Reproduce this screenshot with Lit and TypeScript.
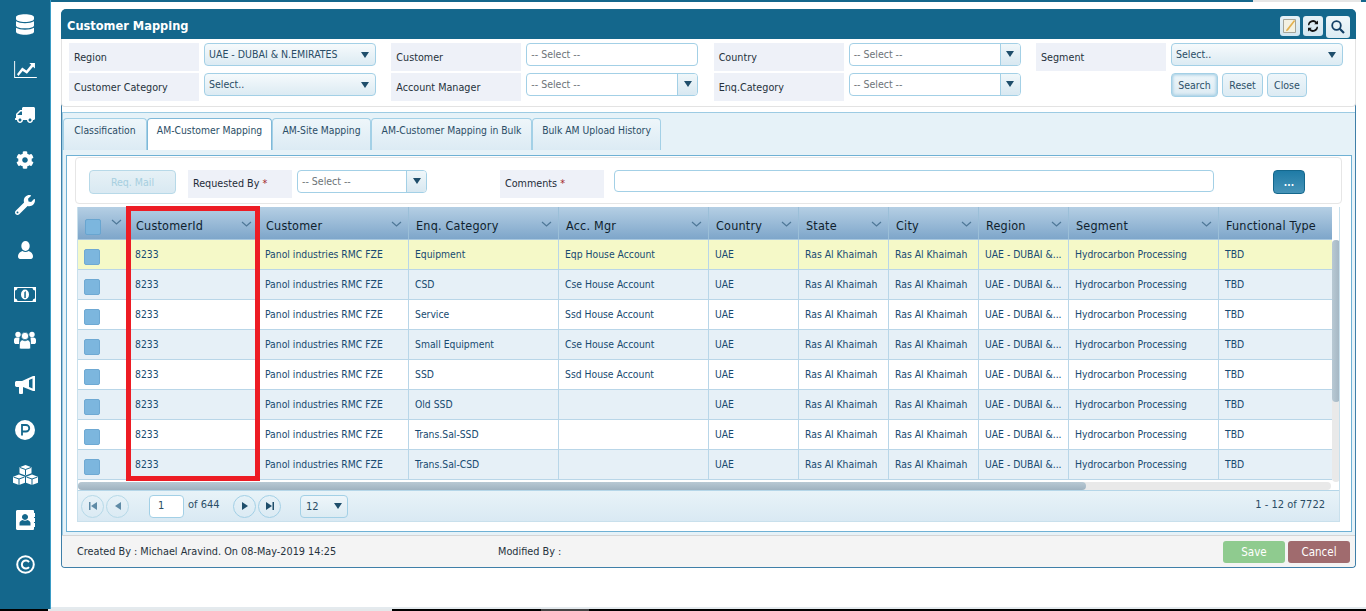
import { LitElement, html, css, svg } from "lit";
import { customElement } from "lit/decorators.js";

const teal = "#14678c";
const icons = [
  svg`<svg width="18" height="21" viewBox="0 0 448 512"><path d="M448 73.143v45.714C448 159.143 347.667 192 224 192S0 159.143 0 118.857V73.143C0 32.857 100.333 0 224 0s224 32.857 224 73.143zM448 176v102.857C448 319.143 347.667 352 224 352S0 319.143 0 278.857V176c48.125 33.143 136.208 48.572 224 48.572S399.874 209.143 448 176zm0 160v102.857C448 479.143 347.667 512 224 512S0 479.143 0 438.857V336c48.125 33.143 136.208 48.572 224 48.572S399.874 369.143 448 336z"/></svg>`,
  svg`<svg width="23" height="17" viewBox="0 0 24 18"><path d="M0 0h1v17h23v1H0z"/><path d="M3 14l5.500-7 4.500 3 5-6-2-2h6v6l-2-2-6.500 7.500-4.500-3-4.500 5.500z"/></svg>`,
  svg`<svg width="20" height="16" viewBox="0 0 640 512"><g transform="translate(640 0) scale(-1 1)"><path d="M624 352h-16V243.900c0-12.700-5.100-24.900-14.100-33.900L494 110.100c-9-9-21.200-14.100-33.900-14.100H416V48c0-26.500-21.500-48-48-48H48C21.500 0 0 21.500 0 48v320c0 26.500 21.500 48 48 48h16c0 53 43 96 96 96s96-43 96-96h128c0 53 43 96 96 96s96-43 96-96h48c8.800 0 16-7.200 16-16v-32c0-8.800-7.200-16-16-16zM160 464c-26.500 0-48-21.500-48-48s21.500-48 48-48 48 21.500 48 48-21.500 48-48 48zm320 0c-26.500 0-48-21.500-48-48s21.500-48 48-48 48 21.500 48 48-21.500 48-48 48zm80-208H416V144h44.100l99.900 99.900V256z"/></g></svg>`,
  svg`<svg width="18" height="18" viewBox="0 0 512 512"><path d="M487.400 315.700l-42.600-24.600c4.300-23.200 4.300-47 0-70.200l42.600-24.600c4.900-2.800 7.100-8.600 5.500-14-11.100-35.600-30-67.800-54.700-94.600-3.800-4.100-10-5.100-14.800-2.300L380.800 110c-17.900-15.400-38.500-27.300-60.800-35.100V25.800c0-5.600-3.900-10.500-9.400-11.700-36.700-8.200-74.300-7.800-109.200 0-5.500 1.200-9.400 6.100-9.400 11.700V75c-22.200 7.900-42.800 19.800-60.800 35.100L88.700 85.500c-4.900-2.800-11-1.900-14.800 2.300-24.700 26.700-43.600 58.900-54.700 94.600-1.700 5.400.6 11.200 5.500 14L67.300 221c-4.300 23.200-4.300 47 0 70.200l-42.600 24.600c-4.900 2.800-7.100 8.600-5.500 14 11.100 35.600 30 67.800 54.700 94.600 3.800 4.100 10 5.100 14.800 2.300l42.600-24.600c17.900 15.400 38.500 27.300 60.800 35.100v49.200c0 5.600 3.900 10.500 9.400 11.700 36.700 8.200 74.300 7.800 109.200 0 5.500-1.200 9.400-6.100 9.400-11.700v-49.200c22.200-7.900 42.800-19.800 60.800-35.100l42.600 24.600c4.900 2.800 11 1.900 14.800-2.300 24.700-26.700 43.600-58.900 54.700-94.600 1.500-5.500-.7-11.300-5.600-14.100zM256 336c-44.100 0-80-35.900-80-80s35.900-80 80-80 80 35.900 80 80-35.900 80-80 80z"/></svg>`,
  svg`<svg width="20" height="20" viewBox="0 0 512 512"><path d="M507.730 109.100c-2.240-9.030-13.540-12.090-20.120-5.510l-74.360 74.360-67.880-11.310-11.310-67.880 74.360-74.360c6.620-6.620 3.430-17.900-5.660-20.160-47.380-11.740-99.550.91-136.580 37.930-39.640 39.640-50.550 97.100-34.050 147.200L18.740 402.760c-24.990 24.990-24.990 65.510 0 90.500 24.990 24.990 65.510 24.990 90.500 0l213.210-213.210c50.120 16.710 107.470 5.680 147.370-34.220 37.070-37.070 49.700-89.320 37.910-136.730zM64 472c-13.250 0-24-10.750-24-24 0-13.260 10.750-24 24-24s24 10.740 24 24c0 13.250-10.750 24-24 24z"/></svg>`,
  svg`<svg width="15" height="18" viewBox="0 0 15 18"><ellipse cx="7.500" cy="5" rx="4.200" ry="5"/><path d="M0 15.500c0-3 2-4.800 4.500-5.500 1.500 1.300 4.500 1.300 6 0 2.500.7 4.500 2.500 4.500 5.500 0 1.500-1 2.500-2 2.500H2c-1 0-2-1-2-2.500z"/></svg>`,
  svg`<svg width="22" height="15" viewBox="0 0 22 15"><path d="M0 0h22v15H0z"/><path fill="${teal}" d="M3.500 1h15c.3 1.500 1 2.300 2.500 2.600v7.800c-1.500.3-2.200 1.100-2.500 2.600h-15C3.200 12.500 2.500 11.700 1 11.400V3.600C2.500 3.300 3.200 2.500 3.500 1z"/><ellipse cx="11" cy="7.500" rx="4" ry="5"/><path d="M10.300 5.200l1.500-1.100v6.900h-1.500z" fill="${teal}"/></svg>`,
  svg`<svg width="22" height="19" viewBox="0 0 22 19"><circle cx="4" cy="4.500" r="2.700"/><circle cx="18" cy="4.500" r="2.700"/><path d="M0 12.500V10c0-1.500 1-2.500 2.500-2.500h3L5 14H1zM22 12.500V10c0-1.500-1-2.500-2.500-2.500h-3L17 14h4z"/><circle cx="11" cy="6" r="3.700" stroke="${teal}" stroke-width=".7"/><path d="M5.500 17.500V14c0-2.500 1.500-3.800 3-4 1.500 1 3.500 1 5 0 1.500.2 3 1.500 3 4v3.500c0 1-1 1.500-1.500 1.500H7c-.5 0-1.500-.5-1.500-1.500z" stroke="${teal}" stroke-width=".6"/></svg>`,
  svg`<svg width="20" height="18" viewBox="0 0 20 18"><path d="M0 6.500c0-1 1-1.500 1.500-1.500H7l11-5h2v15h-2L8 11v6a1 1 0 0 1-1 1H5a1 1 0 0 1-1-1v-6H1.500C1 11 0 10 0 9.500z"/><path fill="${teal}" d="M14 4l3.500-1.600v10.200L14 11z"/></svg>`,
  svg`<svg width="20" height="20" viewBox="0 0 20 20"><circle cx="10" cy="10" r="10"/><path fill="none" stroke="${teal}" stroke-width="1.800" d="M7 15.500V5h4a3 3 0 0 1 0 6.500H7"/></svg>`,
  svg`<svg width="25" height="20" viewBox="0 0 25 20"><path d="M12.500 0l6 2.200v6l-6 2.200-6-2.200v-6z"/><path d="M6 9.500l6 2.200v6L6 20 0 17.700v-6zM19 9.500l6 2.200v6L19 20l-6-2.300v-6z"/><path fill="none" stroke="${teal}" d="M7 2.500l5.500 2 5.500-2M12.500 4.500v5.500M.5 12l5.500 2 5.500-2M6 14v6M13.500 12l5.500 2 5.500-2M19 14v6"/></svg>`,
  svg`<svg width="19" height="20" viewBox="0 0 19 20"><path fill-rule="evenodd" d="M2 0h15a1 1 0 0 1 1 1v18a1 1 0 0 1-1 1H2a2 2 0 0 1-2-1V1a2 2 0 0 1 2-1zM9 4a3 3 0 1 0 .01 0zM3.500 15.500h11v-2.500c0-1.500-1.500-2.500-3-3-1.500 1-3.500 1-5 0-1.500.5-3 1.500-3 3z"/><rect x="18" y="3" width="1" height="4"/><rect x="18" y="8" width="1" height="4"/><rect x="18" y="13" width="1" height="4"/></svg>`,
  svg`<svg width="19" height="19" viewBox="0 0 19 19"><circle cx="9.500" cy="9.500" r="8.300" fill="none" stroke="#fff" stroke-width="2"/><path fill="none" stroke="#fff" stroke-width="2" d="M13 7a4 4 0 1 0 0 5"/></svg>`,
];

const rows = [
  ["Equipment", "Eqp House Account"],
  ["CSD", "Cse House Account"],
  ["Service", "Ssd House Account"],
  ["Small Equipment", "Cse House Account"],
  ["SSD", "Ssd House Account"],
  ["Old SSD", ""],
  ["Trans.Sal-SSD", ""],
  ["Trans.Sal-CSD", ""],
];
const heads = ["CustomerId", "Customer", "Enq. Category", "Acc. Mgr", "Country", "State", "City", "Region", "Segment", "Functional Type"];
const tabs = ["Classification", "AM-Customer Mapping", "AM-Site Mapping", "AM-Customer Mapping in Bulk", "Bulk AM Upload History"];

const chev = svg`<svg class="chev" width="11" height="6" viewBox="0 0 11 6"><path d="M1 1l4.500 4L10 1" fill="none" stroke="#4f7898" stroke-width="1.200"/></svg>`;

@customElement("app-root")
export class AppRoot extends LitElement {
  static styles = css`
    :host { display: flex; flex-direction: column; width: 1366px; height: 611px; overflow: hidden; background: #fff;
      font-family: "DejaVu Sans Condensed", "DejaVu Sans", sans-serif; font-size: 10.5px; color: #1c3d55; font-stretch: condensed; }
    * { box-sizing: border-box; }
    .page { display: flex; height: 609px; flex: none; }
    .black { height: 2px; flex: none; background: #000; display: flex; }
    .black i { display: block; height: 2px; }
    .black .k1 { width: 48px; }
    .black .k2 { width: 344px; background: #e4e8ea; }
    .black .k3 { width: 149px; }
    .black .k4 { width: 48px; background: #444; }
    .side { width: 51px; flex: none; background: #14678c; border-right: 1px solid #3a9cc6; display: flex; flex-direction: column; padding-top: 2px; }
    .side div { height: 45px; display: flex; align-items: center; justify-content: center; fill: #fff; }
    .main { flex: 1; min-width: 0; display: flex; flex-direction: column; }
    .strip { height: 2px; background: #14678c; margin-bottom: 7px; flex: none; display: flex; justify-content: flex-end; padding-right: 5px; }
    .strip i { display: block; width: 108px; background: #e6e6e6; }
    .bline { height: 2px; margin-top: auto; background: #e4eaee; flex: none; }
    .panel { width: 1295px; margin-left: 10px; height: 559px; flex: none; border: 1px solid #3f7fa8; border-top: none; border-radius: 6px 6px 4px 4px; display: flex; flex-direction: column; }
    .title { height: 30px; flex: none; background: #14678c; border-radius: 5px 5px 0 0; display: flex; align-items: flex-start; padding: 7px 6px 0 6px; margin: 0 -1px; color: #fff; font-weight: bold; font-size: 12.7px; }
    .title span { flex: 1; line-height: 20px; }
    .tb { height: 20px; width: 20px; margin-left: 3px; background: linear-gradient(#e6f1f6, #d3e6f0); border-radius: 3px; display: flex; align-items: center; justify-content: center; }
    .tb.s { width: 24px; height: 22px; background: linear-gradient(#f0f7fa, #dcebf3); }
    .filters { height: 68px; flex: none; background: #fff; border: 1px solid #e3e3e3; border-top: none; border-radius: 0 0 4px 4px; margin: 0 -1px 0 -1px; padding: 4px 0 0 7px; display: grid; grid-template-columns: repeat(4, 322.33px); grid-auto-rows: 28px; row-gap: 2px; }
    .f { display: grid; grid-template-columns: 130px 172px; column-gap: 5px; align-items: start; }
    .lab { height: 28px; background: #eef1f8; display: flex; align-items: center; padding: 1px 5px 0; color: #26323c; font-size: 10.7px; white-space: nowrap; }
    .sel { height: 23px; border: 1px solid #a3d0e6; border-radius: 4px; background: linear-gradient(#f6fafc, #dcebf3); display: flex; align-items: flex-start; padding: 4px 4px 0 4px; color: #2a4d66; font-size: 10.5px; white-space: nowrap; }
    .sel span { flex: 1; }
    .tri { width: 0; height: 0; border-left: 4px solid transparent; border-right: 4px solid transparent; border-top: 6px solid #1f4e6b; margin: 4px 2px 0 0; flex: none; }
    .inp { height: 23px; border: 1px solid #a3d0e6; border-radius: 4px; background: #fff; display: flex; color: #6d7478; font-size: 10.5px; overflow: hidden; }
    .inp span { flex: 1; padding: 4px 4px 0; }
    .inp b { width: 20px; flex: none; background: linear-gradient(#f0f7fa, #d8e8f1); border-left: 1px solid #a3d0e6; display: flex; justify-content: center; font-weight: normal; }
    .inp b .tri { margin: 7px 0 0; }
    .btns { display: flex; gap: 4px; align-items: flex-start; }
    .btn { height: 24px; border: 1px solid #a3d0e6; border-radius: 4px; background: linear-gradient(#eef6fa, #dcebf3); display: flex; align-items: center; justify-content: center; color: #2d5069; font-size: 10.5px; }
    .btn.on { box-shadow: inset 0 0 3px 1px #a3cde3; width: 47px; }
    .btn.rs { width: 41px; }
    .btn.cl2 { width: 40px; }
    .tabbox { margin: 5px 0 0; height: 423px; flex: none; background: #e6f2f8; border-top: 1px solid #9ccbe3; border-left: 1px solid #9ccbe3; display: flex; flex-direction: column; }
    .tabs { height: 42px; flex: none; display: flex; padding-top: 5px; gap: 0; }
    .tab { height: 32px; padding: 5px 0 0; text-align: center; background: linear-gradient(#eef6fa, #dcebf4); border: 1px solid #a3d0e6; border-bottom: none; border-radius: 4px 4px 0 0; color: #2a4d66; font-size: 10.3px; white-space: nowrap; }
    .tab:nth-child(1) { width: 84px; } .tab:nth-child(2) { width: 125px; } .tab:nth-child(3) { width: 99px; } .tab:nth-child(4) { width: 161px; } .tab:nth-child(5) { width: 129px; }
    .tab.act { background: #fff; border-color: #7fb8d8; }
    .frame { height: 377px; flex: none; margin: 0 3px 0 3px; background: #fff; border: 1px solid #6fb1d4; padding: 1px 9px 0 8px; display: flex; flex-direction: column; }
    .card { height: 47px; flex: none; border: 1px solid #e6e6e6; border-radius: 4px; display: flex; align-items: flex-start; padding-top: 12px; }
    .req { width: 87px; margin-left: 13px; height: 24px; padding-bottom: 1px; background: linear-gradient(#e6f1f6, #d9e9f2); color: #a7cfe0; border-color: #b7d9e8; font-size: 10.5px; }
    .card .lab { width: 104px; margin-left: 12px; color: #1e2c38; padding: 0 5px 2px; }
    .star { color: #a3262a; margin-left: 3px; }
    .card .inp.rb { width: 130px; margin-left: 5px; }
    .card .lab.cl { margin-left: 73px; }
    .card .cm { width: 600px; height: 22px; margin-left: 10px; }
    .dots { width: 32px; height: 24px; margin-left: 59px; background: linear-gradient(#1f7ba6, #4794b8); border: 1px solid #14678c; border-radius: 4px; color: #fff; display: flex; align-items: center; justify-content: center; font-weight: bold; font-size: 10px; }
    .grid { position: relative; margin: 3px 0 0 2px; width: 1263px; height: 315px; border: 1px solid #c9e0ec; border-top: none; flex: none; display: flex; flex-direction: column; }
    .gh, .gr { display: grid; grid-template-columns: 51px 130px 150px 150px 150px 90px 90px 90px 90px 150px 113px; }
    .gh { height: 33px; flex: none; margin-right: 7px; background: linear-gradient(#b5cfe4, #7ea6ca); border-bottom: 1px solid #a9c8de; }
    .gh > div { display: flex; align-items: center; padding: 5px 5px 0 7px; border-right: 1px solid #9bbfd8; color: #0f1f2e; font-size: 12.5px; letter-spacing: .2px; position: relative; white-space: nowrap; }
    .gh > div:last-child { border: none; }
    .gh .chev { position: absolute; right: 6px; top: 14px; }
    .gh div:first-child .chev { top: 12px; }
    .gh .ck { position: absolute; left: 7px; top: 12px; width: 16px; height: 16px; background: #7cb6de; border: 1px solid #68a5d0; border-radius: 2px; }
    .body { height: 242px; flex: none; display: flex; overflow: hidden; }
    .rows { width: 1254px; flex: none; }
    .gr { height: 30px; border-bottom: 1px solid #b9d6e8; }
    .gr > div { padding: 0 6px 2px; display: flex; align-items: center; border-right: 1px solid #b9d6e8; color: #174a70; font-size: 10.3px; white-space: nowrap; overflow: hidden; }
    .gr > div:last-child { border: none; }
    .gr.y { background: #f5f9c8; } .gr.b { background: #e6f0f7; } .gr.w { background: #fff; }
    .gr .box { width: 16px; height: 16px; background: #7cb6de; border: 1px solid #6ea9d3; border-radius: 2px; margin: 6px 0 0 0; }
    .vs { width: 8px; flex: none; background: #e9e9e9; border-radius: 4px; }
    .vs div { height: 162px; background: linear-gradient(90deg, #b8c9d4, #a3b5c2); border-radius: 4px; }
    .hs { height: 8px; flex: none; margin-right: 8px; background: #e9e9e9; border-radius: 4px; }
    .hs div { width: 1008px; height: 8px; background: linear-gradient(#b8c9d4, #9fb2c0); border-radius: 4px; }
    .pager { flex: 1; display: flex; align-items: center; padding: 0 14px 0 3px; background: linear-gradient(#e8f3f8, #d9e9f3); border-top: 1px solid #b5d6e8; color: #2a4d66; font-size: 11px; }
    .c { width: 23px; height: 23px; border-radius: 50%; border: 1px solid #a3d0e6; display: flex; align-items: center; justify-content: center; margin-right: 2px; fill: #1f4e6b; }
    .c.d { fill: #5f8ba6; border-color: #b6d9e8; }
    .pn { width: 35px; height: 23px; background: #fff; border: 1px solid #a3d0e6; border-radius: 4px; margin: 0 4px 0 18px; padding: 3px 0 0 8px; font-size: 11px; }
    .of { width: 45px; padding-bottom: 3px; }
    .sz { width: 48px; height: 23px; margin-left: 17px; border: 1px solid #a3d0e6; border-radius: 4px; display: flex; align-items: center; padding: 0 5px; background: linear-gradient(#eef6fa, #dcebf3); }
    .sz span { flex: 1; }
    .sz .tri { margin: 0; }
    .total { margin-left: auto; padding-bottom: 3px; }
    .red { position: absolute; left: 48px; top: -1px; width: 134px; height: 275px; border: 5px solid #ed1c24; pointer-events: none; }
    .foot { flex: 1; background: #f4f4f4; border-top: 1px solid #d5d5d5; display: flex; align-items: center; padding: 0 5px 0 15px; font-size: 10.8px; color: #26323c; border-radius: 0 0 4px 4px; }
    .foot .a { width: 421px; }
    .foot .act { margin-left: auto; display: flex; gap: 3px; }
    .foot .act div { width: 62px; height: 22px; border-radius: 3px; color: #fff; display: flex; align-items: center; justify-content: center; font-size: 11.5px; }
    .save { background: #8fcb8f; } .cancel { background: #a06b6e; }
  `;

  render() {
    return html`
      <div class="page">
        <nav class="side">${icons.map((i) => html`<div>${i}</div>`)}</nav>
        <div class="main">
          <div class="strip"><i></i></div>
          <section class="panel">
            <header class="title">
              <span>Customer Mapping</span>
              <div class="tb"><svg width="16" height="16" viewBox="0 0 16 16"><path d="M1.500 1.500h12v13h-12z" fill="#f3f1e2" stroke="#a5a59a"/><path d="M4.500 11.500L12 2l1.200 1L6 12.500l-2 .8z" fill="#e2b04e"/></svg></div>
              <div class="tb"><svg width="10" height="12" viewBox="0 0 12 14"><path d="M1.500 6a4.500 4.500 0 0 1 7.500-2.500L7.500 5H12V.5L10.500 2A6 6 0 0 0 0 6zM10.500 8A4.500 4.500 0 0 1 3 10.500L4.500 9H0v4.500L1.500 12A6 6 0 0 0 12 8z" fill="#111"/></svg></div>
              <div class="tb s"><svg width="14" height="14" viewBox="0 0 14 14"><circle cx="5.500" cy="5.500" r="4.300" fill="none" stroke="#123f66" stroke-width="1.800"/><path d="M8.700 8.700L13 13" stroke="#123f66" stroke-width="2.200"/></svg></div>
            </header>
            <div class="filters">
              <div class="f"><div class="lab">Region</div><div class="sel"><span>UAE - DUBAI &amp; N.EMIRATES</span><i class="tri"></i></div></div>
              <div class="f"><div class="lab">Customer</div><div class="inp"><span>-- Select --</span></div></div>
              <div class="f"><div class="lab">Country</div><div class="inp"><span>-- Select --</span><b><i class="tri"></i></b></div></div>
              <div class="f"><div class="lab">Segment</div><div class="sel"><span>Select..</span><i class="tri"></i></div></div>
              <div class="f"><div class="lab">Customer Category</div><div class="sel"><span>Select..</span><i class="tri"></i></div></div>
              <div class="f"><div class="lab">Account Manager</div><div class="inp"><span>-- Select --</span><b><i class="tri"></i></b></div></div>
              <div class="f"><div class="lab">Enq.Category</div><div class="inp"><span>-- Select --</span><b><i class="tri"></i></b></div></div>
              <div class="f"><div></div><div class="btns"><div class="btn on">Search</div><div class="btn rs">Reset</div><div class="btn cl2">Close</div></div></div>
            </div>
            <div class="tabbox">
              <div class="tabs">
                ${tabs.map((t, i) => html`<div class="tab ${i === 1 ? "act" : ""}">${t}</div>`)}
              </div>
              <div class="frame">
                <div class="card">
                  <div class="btn req">Req. Mail</div>
                  <div class="lab">Requested By<span class="star">*</span></div>
                  <div class="inp rb"><span>-- Select --</span><b><i class="tri"></i></b></div>
                  <div class="lab cl">Comments<span class="star">*</span></div>
                  <div class="inp cm"></div>
                  <div class="dots">...</div>
                </div>
                <div class="grid">
                  <div class="gh">
                    <div><i class="ck"></i>${chev}</div>
                    ${heads.map((h, i) => html`<div>${h}${i < 9 ? chev : ""}</div>`)}
                  </div>
                  <div class="body">
                    <div class="rows">
                      ${rows.map((r, i) => html`
                        <div class="gr ${i === 0 ? "y" : i % 2 ? "b" : "w"}">
                          <div><i class="box"></i></div>
                          <div>8233</div><div>Panol industries RMC FZE</div><div>${r[0]}</div><div>${r[1]}</div>
                          <div>UAE</div><div>Ras Al Khaimah</div><div>Ras Al Khaimah</div><div>UAE - DUBAI &amp;...</div>
                          <div>Hydrocarbon Processing</div><div>TBD</div>
                        </div>`)}
                    </div>
                    <div class="vs"><div></div></div>
                  </div>
                  <div class="hs"><div></div></div>
                  <div class="pager">
                    <div class="c d"><svg width="10" height="10" viewBox="0 0 10 10"><path d="M1 1h1.500v8H1zM9 1v8L3 5z"/></svg></div>
                    <div class="c d"><svg width="8" height="10" viewBox="0 0 8 10"><path d="M7 1v8L1 5z"/></svg></div>
                    <div class="pn">1</div>
                    <div class="of">of 644</div>
                    <div class="c"><svg width="8" height="10" viewBox="0 0 8 10"><path d="M1 1v8l6-4z"/></svg></div>
                    <div class="c"><svg width="10" height="10" viewBox="0 0 10 10"><path d="M1 1v8l6-4zM7.500 1H9v8H7.500z"/></svg></div>
                    <div class="sz"><span>12</span><i class="tri"></i></div>
                    <div class="total">1 - 12 of 7722</div>
                  </div>
                  <div class="red"></div>
                </div>
              </div>
            </div>
            <footer class="foot">
              <div class="a">Created By : Michael Aravind. On 08-May-2019 14:25</div>
              <div>Modified By :</div>
              <div class="act"><div class="save">Save</div><div class="cancel">Cancel</div></div>
            </footer>
          </section>
          <div class="bline"></div>
        </div>
      </div>
      <div class="black"><i class="k1"></i><i class="k2"></i><i class="k3"></i><i class="k4"></i></div>
    `;
  }
}
